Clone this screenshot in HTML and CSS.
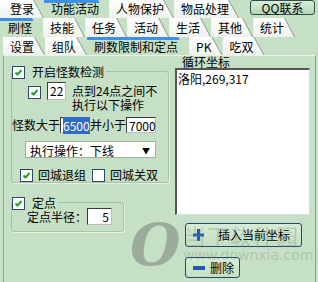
FILE: index.html
```html
<!DOCTYPE html>
<html lang="zh-CN">

<head>
    <meta charset="UTF-8">
    <meta name="viewport" content="width=device-width, initial-scale=1.0">
    <title>刷怪设置</title>
    <link rel="stylesheet" href="styles.css">
</head>

<body>
    <div class="app">
        <div class="tab-row row1">
            <div class="tab">登录</div>
            <div class="tab on">功能活动</div>
            <div class="tab">人物保护</div>
            <div class="tab">物品处理</div>
            <button class="qq-btn" type="button">QQ联系</button>
        </div>
        <div class="tab-row row2">
            <div class="tab on">刷怪</div>
            <div class="tab">技能</div>
            <div class="tab">任务</div>
            <div class="tab">活动</div>
            <div class="tab">生活</div>
            <div class="tab">其他</div>
            <div class="tab">统计</div>
        </div>
        <div class="tab-row row3">
            <div class="tab">设置</div>
            <div class="tab">组队</div>
            <div class="tab on">刷数限制和定点</div>
            <div class="tab">PK</div>
            <div class="tab">吃双</div>
        </div>

        <div class="page">
            <div class="left">
                <div class="group monsters">
                    <label class="group-title">
                        <span class="cb checked"></span>开启怪数检测
                    </label>
                    <div class="hours">
                        <span class="cb checked"></span>
                        <span class="field hour">22</span>
                        <span class="hours-text">点到24点之间不<br>执行以下操作</span>
                    </div>
                    <div class="range">
                        怪数大于<span class="field num"><span class="sel">6500</span></span>并小于<span class="field num">7000</span>
                    </div>
                    <div class="select">
                        <span>执行操作：下线</span>
                        <span class="arrow">▼</span>
                    </div>
                    <div class="checks">
                        <label><span class="cb checked"></span>回城退组</label>
                        <label><span class="cb"></span>回城关双</label>
                    </div>
                </div>

                <div class="group fixed">
                    <label class="group-title">
                        <span class="cb checked"></span>定点
                    </label>
                    <div class="radius">
                        定点半径：<span class="field small">5</span>
                    </div>
                </div>
            </div>

            <div class="right">
                <div class="coords-title">循环坐标</div>
                <div class="coords-list">洛阳,269,317</div>
                <button class="act-btn" type="button">
                    <svg width="11" height="12" viewBox="0 0 11 12"><path d="M4 0h3v4.5h4v3H7V12H4V7.5H0v-3h4z" fill="#2459b0"/></svg>
                    插入当前坐标
                </button>
                <button class="act-btn del" type="button">
                    <svg width="12" height="4" viewBox="0 0 12 4"><path d="M0 0h12v4H0z" fill="#2459b0"/></svg>
                    删除
                </button>
            </div>
        </div>

        <div class="watermark">
            <div class="wm-logo">O</div>
            <div class="wm-name">当下软件园</div>
            <div class="wm-url">www.downxia.com</div>
        </div>
    </div>
</body>

</html>
```

FILE: styles.css
```css
body {
    margin: 0;
    background: #c5e0c5;
    font-family: "SimSun", "Noto Sans CJK SC", sans-serif;
    font-size: 12px;
    line-height: 14px;
    color: #000;
}

.app {
    position: relative;
    width: 318px;
    height: 282px;
    overflow: hidden;
}

/* tab strips */
.tab-row {
    display: flex;
    height: 18px;
}

.row2 {
    height: 19px;
}

.row3 {
    padding-left: 3px;
}

.tab {
    position: relative;
    z-index: 0;
    height: 100%;
    box-sizing: border-box;
    padding: 3px 11px 0 7px;
    white-space: nowrap;
}

.tab::before,
.tab::after {
    content: "";
    position: absolute;
    inset: 0;
    z-index: -1;
}

.tab::before {
    background: #8c9a8c;
    clip-path: polygon(0 0, calc(100% - 10px) 0, 100% 100%, 0 100%);
}

.tab::after {
    background: linear-gradient(#ffffff, #eef2ee);
    clip-path: polygon(0 0, calc(100% - 11px) 0, calc(100% - 1px) 100%, 0 100%);
}

.tab.on::before {
    background: #c5e0c5;
}

.tab.on::after {
    background: linear-gradient(#3f8fe6 0 3px, #c5e0c5 3px);
}

.row1 .tab {
    padding: 2px 10px 0 7px;
}

.row1 .tab:first-child {
    padding-left: 10px;
}

.row2 .tab:first-child {
    padding-left: 8px;
}

.qq-btn {
    width: 65px;
    height: 15px;
    margin: 0 3px 0 auto;
    padding: 0;
    border: 1px solid #2d4f4a;
    border-radius: 3px;
    background: linear-gradient(#d9eed9, #b5d6b5);
    font: inherit;
    line-height: 12px;
}

/* page under the tabs */
.page {
    display: flex;
    height: 227px;
    margin: 0 2px 0 3px;
    border-left: 1px solid #8fa08f;
    border-right: 1px solid #8fa08f;
    border-top: 1px solid #e8f2e8;
}

.left {
    width: 165px;
    padding: 8px 0 0 7px;
    box-sizing: border-box;
}

.group {
    border: 1px solid #a8c2a8;
    border-radius: 3px;
    box-shadow: 1px 1px 0 #e4f0e4;
}

.group-title {
    display: flex;
    align-items: center;
    gap: 7px;
    width: fit-content;
    height: 14px;
    margin: -7px 0 0 0;
    padding-right: 2px;
    background: #c5e0c5;
}

.monsters {
    height: 110px;
    margin-top: 7px;
}

.cb {
    display: inline-block;
    flex: none;
    width: 11px;
    height: 11px;
    border: 1px solid #2e4a5e;
    background: #fff;
}

.cb.checked {
    background: #fff url("data:image/svg+xml,%3Csvg xmlns='http://www.w3.org/2000/svg' width='11' height='11'%3E%3Cpath d='M2.5 5.5l2 2 4-4.5' fill='none' stroke='%2321a121' stroke-width='2'/%3E%3C/svg%3E") no-repeat center;
}

.field {
    display: inline-block;
    box-sizing: border-box;
    height: 16px;
    padding: 1px 2px 0;
    border: 1px solid #3c3c3c;
    border-right-color: #bcbcbc;
    border-bottom-color: #bcbcbc;
    background: #fff;
    text-align: right;
}

.hours {
    display: flex;
    align-items: flex-start;
    margin: 3px 0 0 16px;
}

.hours .cb {
    margin-top: 4px;
}

.hour {
    width: 19px;
    height: 18px;
    margin-left: 6px;
    text-align: left;
}

.hours-text {
    margin: 2px 0 0 6px;
}

.range {
    display: flex;
    align-items: center;
    margin: 5px 0 0 0;
}

.num {
    width: 30px;
    text-align: center;
}

.sel {
    background: #3169c6;
    color: #fff;
}

.select {
    display: flex;
    justify-content: space-between;
    width: 131px;
    height: 17px;
    box-sizing: border-box;
    margin: 8px 0 0 13px;
    padding: 2px 5px 0 4px;
    background: #fff;
    border: 1px solid #9db09d;
}

.arrow {
    font-size: 8px;
}

.checks {
    display: flex;
    gap: 6px;
    margin: 10px 0 0 8px;
}

.checks label {
    display: flex;
    align-items: center;
    gap: 5px;
}

.fixed {
    width: 111px;
    height: 28px;
    margin-top: 19px;
}

.radius {
    display: flex;
    align-items: center;
    margin: -2px 0 0 15px;
}

.small {
    width: 25px;
    height: 17px;
}

.right {
    flex: 1;
    padding: 0 5px 0 6px;
}

.coords-title {
    height: 12px;
    padding-left: 7px;
    line-height: 11px;
}

.coords-list {
    height: 147px;
    box-sizing: border-box;
    padding: 2px 1px;
    background: #fff;
    border: 2px solid #555;
    border-right: 1px solid #ddd;
    border-bottom: 1px solid #ddd;
}

.act-btn {
    display: flex;
    align-items: center;
    gap: 14px;
    height: 24px;
    margin: 8px 0 0 10px;
    padding: 0 11px 0 7px;
    border: 1px solid #26476b;
    border-radius: 3px;
    background: linear-gradient(#d6ecd6, #c3dfc3);
    font: inherit;
}

.act-btn.del {
    height: 21px;
    margin-top: 10px;
    gap: 5px;
    padding-right: 5px;
}

/* faint site watermark over the panel */
.watermark {
    position: absolute;
    inset: 0;
    pointer-events: none;
    color: rgba(120, 130, 120, 0.3);
}

.wm-logo {
    position: absolute;
    left: 130px;
    top: 214px;
    font: italic bold 58px/62px "DejaVu Serif", serif;
    color: rgba(120, 130, 120, 0.55);
}

.wm-name {
    position: absolute;
    left: 184px;
    top: 222px;
    font-size: 22px;
    line-height: 26px;
    letter-spacing: 1px;
}

.wm-url {
    position: absolute;
    left: 183px;
    top: 247px;
    font: 14px/16px "DejaVu Sans", sans-serif;
}
```
